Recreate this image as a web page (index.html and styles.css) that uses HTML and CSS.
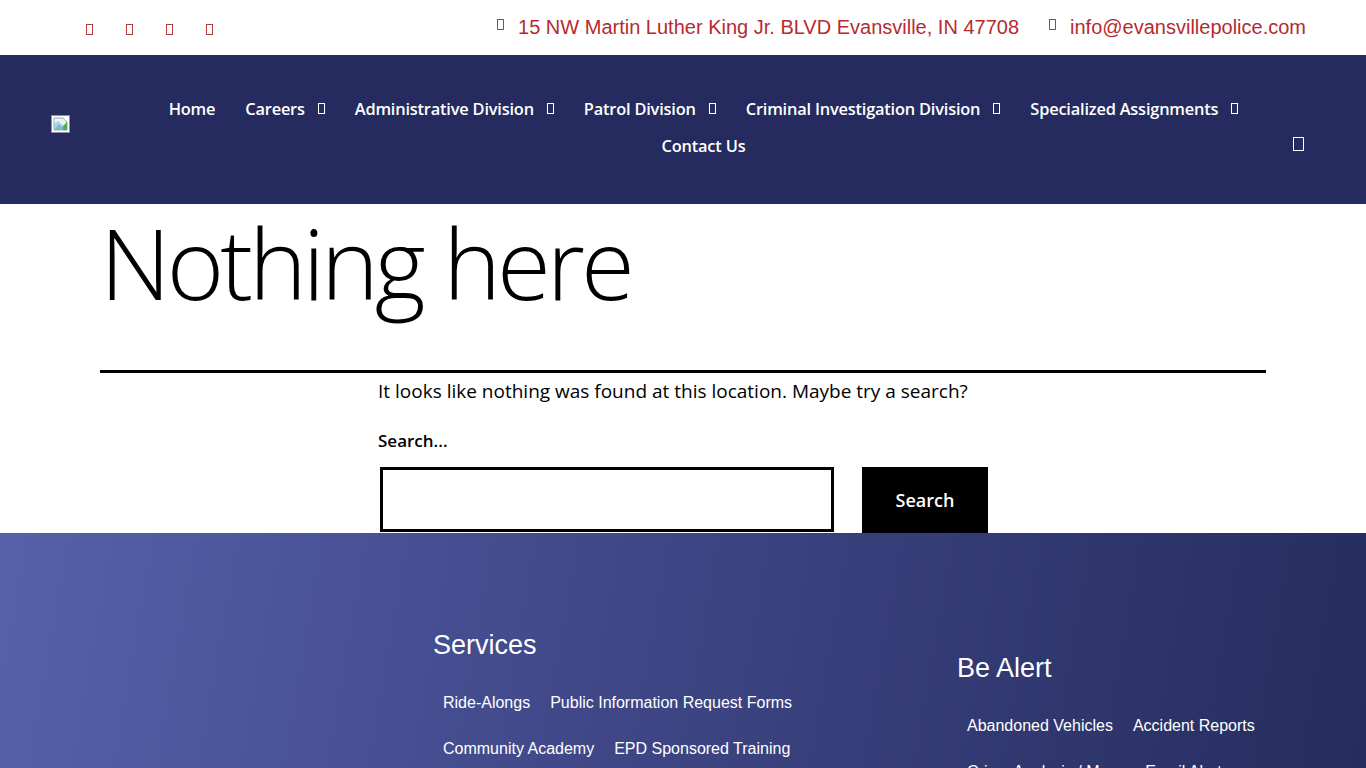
FILE: index.html
```html
<!DOCTYPE html>
<html lang="en">
<head>
    <meta charset="UTF-8">
    <meta name="viewport" content="width=device-width, initial-scale=1.0">
    <title>Nothing here - Evansville Police Department</title>
    <link rel="stylesheet" href="styles.css">
</head>
<body>
    <div class="topbar">
        <div class="social">
            <a href="#" class="tofu red"></a>
            <a href="#" class="tofu red"></a>
            <a href="#" class="tofu red"></a>
            <a href="#" class="tofu red"></a>
        </div>
        <div class="contact">
            <span class="contact-item"><span class="tofu red"></span>15 NW Martin Luther King Jr. BLVD Evansville, IN 47708</span>
            <span class="contact-item"><span class="tofu red"></span>info@evansvillepolice.com</span>
        </div>
    </div>

    <header class="navbar">
        <a href="#" class="logo">
            <svg width="19" height="18" viewBox="0 0 19 18">
                <rect x="0.5" y="0.5" width="18" height="17" fill="#fff" stroke="#8a8fa8"/>
                <path d="M3 3h9l4 4v8H3z" fill="#eef1f6" stroke="#9aa3b5"/>
                <path d="M3 15l5-6 3 3 5-5v8z" fill="#4caf50"/>
                <path d="M3 9l4-3 5 4v5H3z" fill="#8bc7e8" opacity="0.7"/>
            </svg>
        </a>
        <nav class="menu">
            <a href="#">Home</a>
            <a href="#">Careers<span class="tofu caret"></span></a>
            <a href="#">Administrative Division<span class="tofu caret"></span></a>
            <a href="#">Patrol Division<span class="tofu caret"></span></a>
            <a href="#">Criminal Investigation Division<span class="tofu caret"></span></a>
            <a href="#">Specialized Assignments<span class="tofu caret"></span></a>
            <a href="#">Contact Us</a>
        </nav>
        <a href="#" class="toggle"><span class="tofu big"></span></a>
    </header>

    <main class="content">
        <h1 class="page-title">Nothing here</h1>
        <hr class="rule">
        <div class="inner">
            <p>It looks like nothing was found at this location. Maybe try a search?</p>
            <form class="search">
                <label for="s">Search...</label>
                <div class="search-row">
                    <input type="search" id="s">
                    <button type="submit">Search</button>
                </div>
            </form>
        </div>
    </main>

    <footer class="footer">
        <div class="col col-services">
            <h2>Services</h2>
            <ul>
                <li><a href="#">Ride-Alongs</a></li>
                <li><a href="#">Public Information Request Forms</a></li>
                <li><a href="#">Community Academy</a></li>
                <li><a href="#">EPD Sponsored Training</a></li>
            </ul>
        </div>
        <div class="col col-alert">
            <h2>Be Alert</h2>
            <ul>
                <li><a href="#">Abandoned Vehicles</a></li>
                <li><a href="#">Accident Reports</a></li>
                <li><a href="#">Crime Analysis / Maps</a></li>
                <li><a href="#">Email Alerts</a></li>
            </ul>
        </div>
    </footer>
</body>
</html>
```

FILE: styles.css
```css
* {
    margin: 0;
    padding: 0;
    box-sizing: border-box;
}

body {
    font-family: "Open Sans", sans-serif;
    background: #fff;
    color: #000;
    height: 768px;
    overflow: hidden;
}

a {
    color: inherit;
    text-decoration: none;
}

/* missing icon font glyph boxes */
.tofu {
    display: inline-block;
    width: 7px;
    height: 11px;
    border: 1px solid currentColor;
    vertical-align: middle;
}

.tofu.red {
    color: #b93a3f;
}

.tofu.caret {
    margin-left: 13px;
    width: 7px;
    height: 11px;
    position: relative;
    top: -2px;
}

.tofu.big {
    width: 11px;
    height: 14px;
}

/* top bar */
.topbar {
    height: 55px;
    display: flex;
    align-items: center;
    justify-content: space-between;
    padding: 0 60px 0 86px;
}

.social {
    display: flex;
    gap: 33px;
    padding-top: 4px;
}

.contact {
    display: flex;
    gap: 30px;
    font-family: "Liberation Sans", Arial, sans-serif;
    font-size: 20px;
    color: #b72a2e;
}

.contact-item .tofu {
    margin-right: 14px;
    position: relative;
    top: -4px;
}

/* nav */
.navbar {
    height: 149px;
    background: #252b5e;
    display: flex;
    align-items: center;
    padding: 0 62px 0 51px;
}

.logo {
    display: flex;
    margin-top: -12px;
}

.menu {
    flex: 1;
    display: flex;
    flex-wrap: wrap;
    justify-content: center;
    padding: 0 34px 0 78px;
    margin-top: -6px;
}

.menu a {
    color: #fff;
    font-size: 16.4px;
    font-weight: 600;
    line-height: 37px;
    padding: 0 15px;
    letter-spacing: -0.2px;
}

.toggle {
    color: #fff;
    margin-top: 26px;
}

/* main */
.content {
    height: 329px;
    padding: 0 100px;
}

.page-title {
    font-size: 98px;
    font-weight: 300;
    line-height: 1;
    letter-spacing: -4px;
    padding: 9px 0 0 0;
    height: 166px;
}

.rule {
    border: none;
    border-top: 3px solid #000;
}

.inner {
    width: 610px;
    margin: 0 auto;
    padding-top: 4px;
}

.inner p {
    font-size: 19px;
    line-height: 28px;
}

.search {
    margin-top: 24px;
}

.search label {
    display: block;
    font-size: 17px;
    font-weight: 600;
    line-height: 24px;
}

.search-row {
    display: flex;
    gap: 28px;
    margin-top: 14px;
    padding-left: 2px;
}

.search input {
    width: 454px;
    height: 65px;
    border: 3px solid #000;
    font-family: inherit;
    font-size: 18px;
}

.search button {
    width: 126px;
    height: 66px;
    background: #000;
    color: #fff;
    border: none;
    font-family: inherit;
    font-size: 18px;
    font-weight: 600;
}

/* footer */
.footer {
    height: 235px;
    background: linear-gradient(100deg, #5661a9 0%, #3f4787 45%, #252c5e 100%);
    color: #fff;
    font-family: "Liberation Sans", Arial, sans-serif;
    display: flex;
    padding-left: 433px;
}

.col h2 {
    font-size: 27px;
    font-weight: 400;
    line-height: 30px;
}

.col ul {
    list-style: none;
    display: flex;
    flex-wrap: wrap;
    padding-left: 10px;
    margin-top: 20px;
}

.col li {
    font-size: 16px;
    line-height: 46px;
    margin-right: 20px;
}

.col-services {
    width: 524px;
    padding-top: 97px;
}

.col-services ul {
    width: 410px;
}

.col-alert {
    padding-top: 120px;
}

.col-alert ul {
    width: 340px;
}
```
